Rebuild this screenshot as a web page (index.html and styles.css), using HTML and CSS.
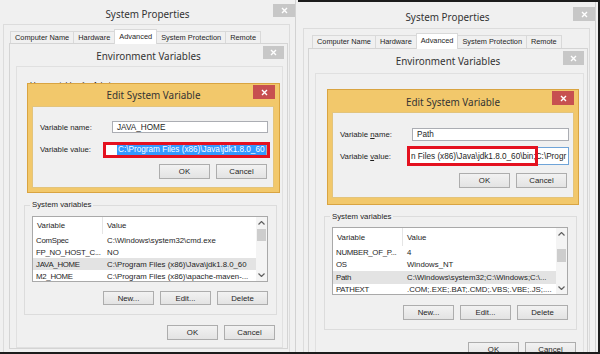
FILE: index.html
```html
<!DOCTYPE html>
<html lang="en">
<head>
    <meta charset="UTF-8">
    <title>Environment Variables</title>
    <link rel="stylesheet" href="styles.css">
</head>
<body>
    <div class="page">
        <!-- Shot 1: editing JAVA_HOME -->
        <div class="shot left">
            <div class="win sys">
                <div class="bar sys-bar">
                    <span class="title">System Properties</span>
                    <span class="close"><svg width="7" height="7" viewBox="0 0 7 7"><path d="M1 1L6 6M6 1L1 6"/></svg></span>
                </div>
                <div class="sys-body">
                    <div class="tabs">
                        <span class="tab">Computer Name</span>
                        <span class="tab">Hardware</span>
                        <span class="tab active">Advanced</span>
                        <span class="tab">System Protection</span>
                        <span class="tab">Remote</span>
                    </div>
                    <div class="win env">
                        <div class="bar env-bar">
                            <span class="title">Environment Variables</span>
                            <span class="close"><svg width="7" height="7" viewBox="0 0 7 7"><path d="M1 1L6 6M6 1L1 6"/></svg></span>
                        </div>
                        <div class="env-body">
                            <div class="user-area">
                                <div class="caption">User variables for Admin</div>
                            </div>

                            <div class="win edit">
                                <div class="bar edit-bar">
                                    <span class="title">Edit System Variable</span>
                                    <span class="close red"><svg width="7" height="7" viewBox="0 0 7 7"><path d="M1 1L6 6M6 1L1 6"/></svg></span>
                                </div>
                                <div class="edit-body">
                                    <div class="fields">
                                        <label>Variable name:</label>
                                        <div class="input name">JAVA_HOME</div>
                                        <label>Variable value:</label>
                                        <div class="input value">
                                            <span class="sel">C:\Program Files (x86)\Java\jdk1.8.0_60</span>
                                            <span class="mark"></span>
                                        </div>
                                    </div>
                                    <div class="actions">
                                        <button class="btn">OK</button>
                                        <button class="btn">Cancel</button>
                                    </div>
                                </div>
                            </div>

                            <div class="group">
                                <div class="legend">System variables</div>
                                <div class="list">
                                    <div class="rows">
                                        <div class="row head"><span>Variable</span><span>Value</span></div>
                                        <div class="row"><span>ComSpec</span><span>C:\Windows\system32\cmd.exe</span></div>
                                        <div class="row"><span>FP_NO_HOST_C...</span><span>NO</span></div>
                                        <div class="row picked"><span>JAVA_HOME</span><span>C:\Program Files (x86)\Java\jdk1.8.0_60</span></div>
                                        <div class="row"><span>M2_HOME</span><span>C:\Program Files (x86)\apache-maven-...</span></div>
                                    </div>
                                    <div class="scrollbar">
                                        <span class="arrow"><svg width="7" height="4" viewBox="0 0 7 4"><path d="M0.5 3.5L3.5 0.5L6.5 3.5"/></svg></span>
                                        <span class="thumb"></span>
                                        <span class="track"></span>
                                        <span class="arrow"><svg width="7" height="4" viewBox="0 0 7 4"><path d="M0.5 0.5L3.5 3.5L6.5 0.5"/></svg></span>
                                    </div>
                                </div>
                                <div class="actions">
                                    <button class="btn">New...</button>
                                    <button class="btn">Edit...</button>
                                    <button class="btn">Delete</button>
                                </div>
                            </div>

                            <div class="actions dlg">
                                <button class="btn">OK</button>
                                <button class="btn">Cancel</button>
                            </div>
                        </div>
                    </div>
                </div>
            </div>
        </div>

        <!-- Shot 2: editing Path -->
        <div class="shot right">
            <div class="win sys">
                <div class="bar sys-bar">
                    <span class="title">System Properties</span>
                    <span class="close"><svg width="7" height="7" viewBox="0 0 7 7"><path d="M1 1L6 6M6 1L1 6"/></svg></span>
                </div>
                <div class="sys-body">
                    <div class="tabs">
                        <span class="tab">Computer Name</span>
                        <span class="tab">Hardware</span>
                        <span class="tab active">Advanced</span>
                        <span class="tab">System Protection</span>
                        <span class="tab">Remote</span>
                    </div>
                    <div class="win env">
                        <div class="bar env-bar">
                            <span class="title">Environment Variables</span>
                            <span class="close"><svg width="7" height="7" viewBox="0 0 7 7"><path d="M1 1L6 6M6 1L1 6"/></svg></span>
                        </div>
                        <div class="env-body">
                            <div class="user-area">
                                <div class="caption">User variables for Admin</div>
                            </div>

                            <div class="win edit">
                                <div class="bar edit-bar">
                                    <span class="title">Edit System Variable</span>
                                    <span class="close red"><svg width="7" height="7" viewBox="0 0 7 7"><path d="M1 1L6 6M6 1L1 6"/></svg></span>
                                </div>
                                <div class="edit-body">
                                    <div class="fields">
                                        <label>Variable <u>n</u>ame:</label>
                                        <div class="input name">Path</div>
                                        <label>Variable <u>v</u>alue:</label>
                                        <div class="input value focus">
                                            <span class="cut">n Files (x86)\Java\jdk1.8.0_60\bin;C:\Progr</span>
                                            <span class="mark"></span>
                                        </div>
                                    </div>
                                    <div class="actions">
                                        <button class="btn">OK</button>
                                        <button class="btn">Cancel</button>
                                    </div>
                                </div>
                            </div>

                            <div class="group">
                                <div class="legend">System variables</div>
                                <div class="list">
                                    <div class="rows">
                                        <div class="row head"><span>Variable</span><span>Value</span></div>
                                        <div class="row"><span>NUMBER_OF_P...</span><span>4</span></div>
                                        <div class="row"><span>OS</span><span>Windows_NT</span></div>
                                        <div class="row picked"><span>Path</span><span>C:\Windows\system32;C:\Windows;C:\...</span></div>
                                        <div class="row"><span>PATHEXT</span><span>.COM;.EXE;.BAT;.CMD;.VBS;.VBE;.JS;....</span></div>
                                    </div>
                                    <div class="scrollbar">
                                        <span class="arrow"><svg width="7" height="4" viewBox="0 0 7 4"><path d="M0.5 3.5L3.5 0.5L6.5 3.5"/></svg></span>
                                        <span class="thumb"></span>
                                        <span class="track"></span>
                                        <span class="arrow"><svg width="7" height="4" viewBox="0 0 7 4"><path d="M0.5 0.5L3.5 3.5L6.5 0.5"/></svg></span>
                                    </div>
                                </div>
                                <div class="actions">
                                    <button class="btn">New...</button>
                                    <button class="btn">Edit...</button>
                                    <button class="btn">Delete</button>
                                </div>
                            </div>

                            <div class="actions dlg">
                                <button class="btn">OK</button>
                                <button class="btn">Cancel</button>
                            </div>
                        </div>
                    </div>
                </div>
            </div>
        </div>
    </div>
</body>
</html>
```

FILE: styles.css
```css
/* Reset */
* {
    box-sizing: border-box;
    margin: 0;
    padding: 0;
}

body {
    width: 600px;
    height: 354px;
    overflow: hidden;
    background-color: #f0f0f0;
    font-family: 'Liberation Sans', Arial, sans-serif;
    font-size: 7.8px;
    color: #1e1e1e;
}

/* Two screenshots side by side */
.page {
    display: flex;
    height: 354px;
    border-bottom: 2px solid #1c1c1c;
}

.shot {
    width: 298px;
    height: 352px;
    overflow: hidden;
}

.shot.right {
    width: 302px;
    border-top: 2px solid #1c1c1c;
    border-right: 2px solid #1c1c1c;
}

.right .sys {
    margin-left: 2px;
}

/* Windows */
.win {
    background-color: #f0f0f0;
}

.bar {
    display: grid;
    grid-template-columns: 1fr auto 1fr;
    align-items: start;
}

.bar::before {
    content: "";
}

.title {
    font-family: 'Noto Sans', 'Open Sans', sans-serif;
    font-size: 9.9px;
    line-height: 12px;
    color: #333;
    white-space: nowrap;
}

.close {
    justify-self: end;
    display: flex;
    align-items: center;
    justify-content: center;
    width: 22px;
    height: 13px;
    background-color: #c7c7c7;
}

.close svg path {
    stroke: #fff;
    stroke-width: 1.4;
}

.close.red {
    height: 14px;
    background-color: #c75050;
}

/* System Properties */
.sys {
    width: 296px;
    height: 352px;
    border-right: 1px solid #d2d2d2;
}

.sys-bar {
    height: 24px;
}

.sys-bar .title {
    margin-top: 8px;
}

.sys-bar .close {
    margin-top: 4px;
}

.right .sys-bar {
    height: 26px;
}

.right .sys-bar .title {
    margin-top: 9px;
}

.right .sys-bar .close {
    margin-top: 5px;
    height: 14px;
}

.sys-body {
    height: 340px;
    margin: 0 5px 0 3px;
    padding: 6px 0 0 6px;
    border: 1px solid #dcdcdc;
}

.right .sys-body {
    padding-left: 8px;
}

/* Tabs */
.tabs {
    display: flex;
    align-items: flex-start;
    height: 12px;
    font-size: 7.4px;
}

.right .tabs {
    height: 13px;
    font-size: 7.35px;
}

.tab {
    height: 100%;
    padding: 0 4px;
    margin-right: -1px;
    border: 1px solid #d9d9d9;
    border-bottom: none;
    background-color: #f0f0f0;
    line-height: 11px;
    white-space: nowrap;
}

.right .tab {
    line-height: 12px;
}

.tab.active {
    position: relative;
    height: calc(100% + 3px);
    margin-top: -2px;
    padding-top: 1px;
    background-color: #fff;
}

/* Environment Variables */
.env {
    width: 279px;
    margin-left: -1px;
    border: 1px solid #d4d4d4;
}

.right .env {
    width: 280px;
    margin-left: -4px;
}

.env-bar {
    height: 22px;
}

.right .env-bar {
    height: 24px;
}

.env-bar .title {
    margin-top: 6px;
}

.env-bar .close {
    margin-top: 2px;
    margin-right: 3px;
    width: 21px;
}

.right .env-bar .close {
    height: 14px;
}

.env-body {
    position: relative;
    margin: 0 4px 0 6px;
    padding-bottom: 7px;
    border: 1px solid #e0e0e0;
}

.right .env-body {
    margin-right: 3px;
}

.user-area {
    height: 138px;
    padding: 13px 0 0 13px;
}

.right .user-area {
    height: 142px;
    padding: 14px 0 0 13px;
}

.caption {
    line-height: 10px;
}

/* Edit System Variable dialog */
.edit {
    position: absolute;
    left: 10px;
    top: 16px;
    width: 253px;
    border: 1px solid #d9a441;
    background-color: #f2c86b;
}

.right .edit {
    left: 11px;
    top: 15px;
    width: 252px;
}

.edit-bar {
    height: 22px;
}

.edit-bar .title {
    margin-top: 5px;
}

.right .edit-bar .title {
    margin-top: 6px;
}

.edit-bar .close {
    margin-top: 1px;
    margin-right: 4px;
}

.edit-body {
    margin: 0 5px 4px 4px;
    padding: 14px 6px 8px 7px;
    border: 1px solid #e3c47c;
    background-color: #f0f0f0;
}

.right .edit-body {
    margin: 0 4px 6px 4px;
    padding: 15px 6px 9px 7px;
}

.fields {
    display: grid;
    grid-template-columns: 72px 1fr;
    row-gap: 9px;
    align-items: center;
}

.right .fields {
    row-gap: 6px;
}

.input {
    background-color: #fff;
    border: 1px solid #abadb3;
    font-size: 8.2px;
    white-space: nowrap;
    overflow: hidden;
    display: flex;
    align-items: center;
}

.input.name {
    height: 12px;
    padding-left: 4px;
}

.right .input.name {
    height: 13px;
}

.input.value {
    position: relative;
    overflow: visible;
    height: 14px;
    margin: 0 1px 0 -7px;
    padding-left: 11px;
}

.right .input.value {
    height: 18px;
    margin: 0 0 0 -5px;
    padding-left: 3px;
}

.input.focus {
    border-color: #6fa4d8;
}

.sel {
    padding: 1px 1px;
    background-color: #3399ff;
    color: #fff;
}

.cut {
    overflow: hidden;
    width: 157px;
}

/* red annotation frame drawn over the value box */
.mark {
    position: absolute;
    left: -3px;
    top: -1px;
    width: 167px;
    height: 16px;
    border: 3px solid #e4111f;
}

.right .mark {
    left: -1px;
    top: -2px;
    width: 131px;
    height: 20px;
}

/* Buttons */
.actions {
    display: flex;
    justify-content: flex-end;
    gap: 6px;
}

.edit-body .actions {
    margin-top: 8px;
}

.btn {
    width: 51px;
    height: 15px;
    border: 1px solid #adadad;
    background: linear-gradient(#f2f2f2, #e3e3e3);
    font-family: 'Liberation Sans', Arial, sans-serif;
    font-size: 7.8px;
    color: #1e1e1e;
}

.dlg {
    margin-top: 10px;
    padding-right: 7px;
}

.right .dlg {
    margin-top: 12px;
}

/* System variables group */
.group {
    margin: 0 5px 0 7px;
    padding: 0 8px 9px 7px;
    border: 1px solid #dcdcdc;
}

.right .group {
    margin: 0 6px 0 8px;
}

.legend {
    width: fit-content;
    margin: -6px 0 0 -2px;
    padding: 0 2px;
    line-height: 10px;
    background-color: #f0f0f0;
}

.right .legend {
    margin-top: -5px;
}

.list {
    display: flex;
    height: 66px;
    margin-top: 6px;
    border: 1px solid #a9a9a9;
    background-color: #fff;
    overflow: hidden;
}

.right .list {
    height: 68px;
    margin-top: 5px;
}

.rows {
    flex: 1;
}

.row {
    display: grid;
    grid-template-columns: 69px 1fr;
    align-items: center;
    height: 12px;
    white-space: nowrap;
}

.right .row {
    height: 12.5px;
}

.row span {
    padding-left: 4px;
    overflow: hidden;
}

.row span:first-child {
    padding-left: 3px;
    letter-spacing: -0.25px;
}

.row span + span {
    padding-left: 5px;
}

.row.head {
    height: 17px;
}

.right .row.head {
    height: 18px;
}

.row.head span:first-child {
    letter-spacing: 0;
    padding-left: 4px;
}

.row.head span + span {
    height: 100%;
    display: flex;
    align-items: center;
    border-left: 1px solid #e5e5e5;
    padding-left: 4px;
}

.row.picked {
    background-color: #e3e3e3;
}

.scrollbar {
    display: flex;
    flex-direction: column;
    width: 11px;
    background-color: #f4f4f4;
}

.scrollbar .arrow {
    display: flex;
    align-items: center;
    justify-content: center;
    height: 12px;
}

.scrollbar svg path {
    fill: none;
    stroke: #606060;
    stroke-width: 1.2;
}

.thumb {
    height: 12px;
    margin: 0 1px;
    background-color: #cdcdcd;
}

.right .thumb {
    height: 13px;
    margin-top: 9px;
}

.track {
    flex: 1;
}

.group .actions {
    margin-top: 9px;
}

.group .btn {
    height: 14px;
}

.right .group .actions {
    margin-top: 10px;
}

.right .group .btn {
    height: 15px;
}
```
